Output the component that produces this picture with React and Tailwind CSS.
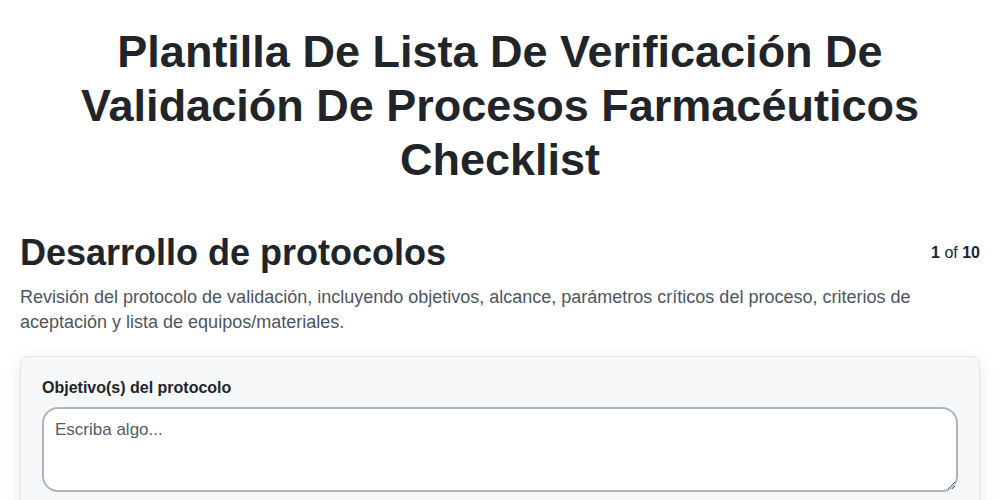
import React from "react";

const App = () => {
  return (
    <div
      className="min-h-screen bg-white px-5 text-[#212529]"
      style={{ fontFamily: '"Liberation Sans", Arial, sans-serif' }}
    >
      <h1 className="mx-auto max-w-[880px] pt-[25px] text-center text-[45px] font-bold leading-[54px]">
        Plantilla De Lista De Verificación De Validación De Procesos Farmacéuticos Checklist
      </h1>

      <div className="mt-[44px] flex items-center justify-between">
        <h2 className="text-[36px] font-bold leading-[44px]">Desarrollo de protocolos</h2>
        <div className="text-[16px] leading-[22px]">
          <span className="font-bold">1</span> of <span className="font-bold">10</span>
        </div>
      </div>

      <p className="mt-[10px] text-[18px] leading-[25px] text-[#4b5563]">
        Revisión del protocolo de validación, incluyendo objetivos, alcance, parámetros críticos del proceso, criterios de aceptación y lista de equipos/materiales.
      </p>

      <div className="mt-[21px] rounded-lg border border-[#e3e5ea] bg-[#f6f7f9] px-[21px] pt-[20px] pb-6 shadow-[0_4px_18px_rgba(0,0,0,0.09)]">
        <label className="block text-[16px] font-bold leading-[22px]">Objetivo(s) del protocolo</label>
        <textarea
          placeholder="Escriba algo..."
          className="mt-[8px] block h-[85px] w-full rounded-2xl border-2 border-[#adb5bd] bg-white px-[11px] py-[9px] text-[17px] leading-[24px] placeholder:text-[#555b66]"
        />
      </div>
    </div>
  );
};

export default App;
